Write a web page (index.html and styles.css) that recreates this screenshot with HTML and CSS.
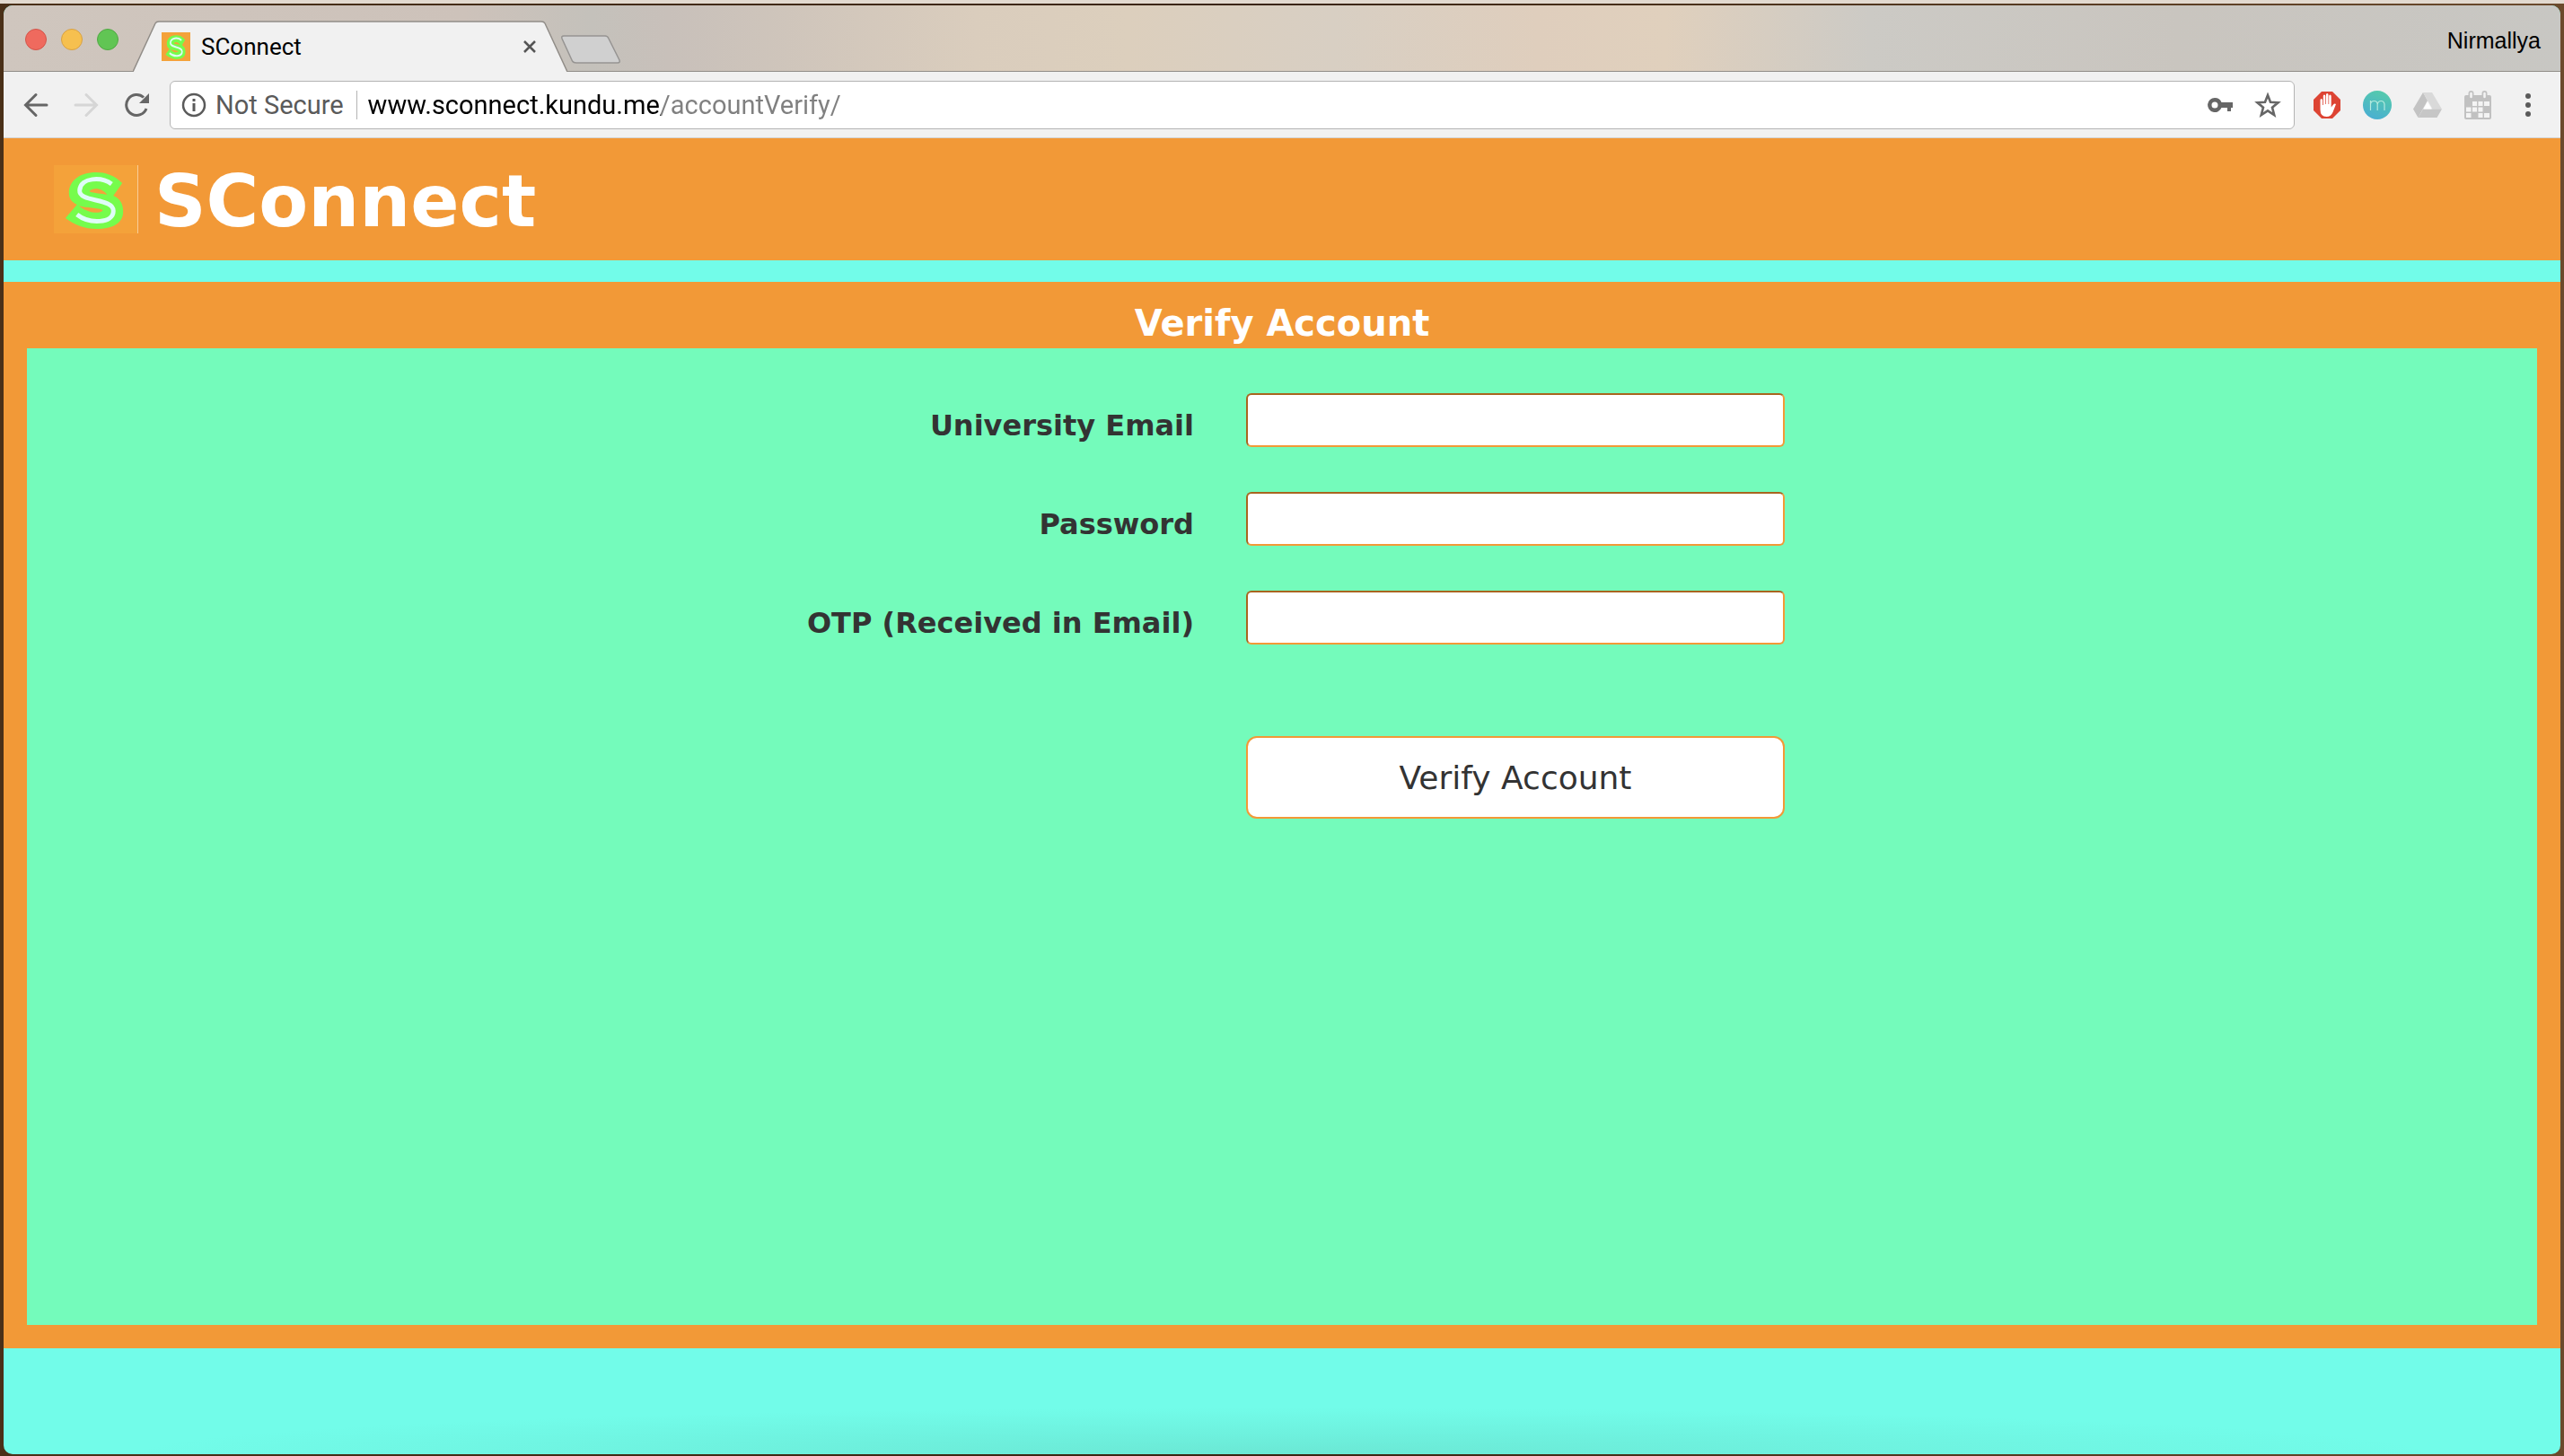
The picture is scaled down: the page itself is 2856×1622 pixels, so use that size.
FILE: index.html
```
<!DOCTYPE html>
<html lang="en">
<head>
<meta charset="utf-8">
<title>SConnect</title>
<link rel="stylesheet" href="styles.css">
</head>
<body>
<svg class="defs" width="0" height="0" aria-hidden="true">
  <symbol id="logo" viewBox="0 0 94 76" preserveAspectRatio="none">
    <rect width="94" height="76" fill="#f4a23a"/>
    <path fill-rule="evenodd" d="M77 20C68 11 58 8 48 8C28 8 17 18 17 31C17 37 20 41 26 44L13 59C24 67 35 71 48 71C67 71 78 64 78 52C78 42 74 37 67 34ZM40 29C44 25 54 25 60 33C50 31 42 31 40 29ZM28 45C36 48 50 47 55 50C54 54 40 55 28 45Z" fill="#76fc4c"/>
    <path d="M65 21C54 13 30 13 29 28C28 42 67 36 67 51C67 65 40 66 26 55" fill="none" stroke="#dffcf8" stroke-width="5"/>
  </symbol>
</svg>
<div class="window">
  <header class="titlebar">
    <div class="lights"><span class="light red"></span><span class="light yellow"></span><span class="light green"></span></div>
    <div class="tab">
      <svg class="tab-shape" viewBox="0 0 484 57" preserveAspectRatio="none"><path d="M0 57L25 3Q26 1 29 1H455Q458 1 459 3L484 57" fill="#f1f1f1" stroke="#918d88" stroke-width="1.500"/></svg>
      <svg class="favicon"><use href="#logo"/></svg>
      <span class="tab-title">SConnect</span>
      <button class="close" aria-label="Close tab"><svg width="16" height="16" viewBox="0 0 16 16"><path d="M2 2L14 14M14 2L2 14" stroke="#555" stroke-width="2.500"/></svg></button>
    </div>
    <button class="new-tab" aria-label="New tab"><svg width="68" height="34" viewBox="0 0 68 34"><path d="M4 1H50Q53 1 54 4L66 28Q67 31 64 31H18Q14 31 13 28L2 4Q1 1 4 1Z" fill="#d0d0d0" stroke="#969492" stroke-width="1.500"/></svg></button>
    <span class="profile">Nirmallya</span>
  </header>
  <nav class="toolbar">
    <button class="nav" aria-label="Back"><svg width="28" height="28" viewBox="0 0 28 28"><path d="M26 14H3M14 2.500L2.500 14L14 25.500" fill="none" stroke="#666" stroke-width="3" stroke-linecap="round"/></svg></button>
    <button class="nav" aria-label="Forward"><svg width="28" height="28" viewBox="0 0 28 28"><path d="M2 14H25M14 2.500L25.500 14L14 25.500" fill="none" stroke="#d6d6d6" stroke-width="3" stroke-linecap="round"/></svg></button>
    <button class="nav" aria-label="Reload"><svg width="28" height="28" viewBox="0 0 28 28"><path d="M25 18A11.500 11.500 0 1 1 22 5.500" fill="none" stroke="#666" stroke-width="3"/><path d="M28 1V12H17Z" fill="#666"/></svg></button>
    <div class="address">
      <svg width="28" height="28" viewBox="0 0 28 28"><circle cx="14" cy="14" r="12" fill="none" stroke="#5a5a5a" stroke-width="2.500"/><path d="M12.500 7H15.500V10H12.500ZM12.500 12H15.500V21H12.500Z" fill="#5a5a5a"/></svg>
      <span class="security">Not Secure</span>
      <input class="url" type="text" aria-label="Address" value="www.sconnect.kundu.me/accountVerify/">
      <svg width="28" height="18" viewBox="0 0 28 18"><path fill-rule="evenodd" d="M8 1A8 8 0 1 0 15.500 12H22V16H26V12H28V6H15.500A8 8 0 0 0 8 1ZM8 5.500A3.500 3.500 0 1 1 8 12.500A3.500 3.500 0 1 1 8 5.500Z" fill="#666"/></svg>
      <svg class="star" width="30" height="30" viewBox="0 0 30 30"><path d="M15 4L18 11.800L26.500 12.300L20 17.700L22.200 26L15 21.400L7.800 26L10 17.700L3.500 12.300L12 11.800Z" fill="none" stroke="#666" stroke-width="2.600"/></svg>
    </div>
    <div class="extensions">
      <svg width="32" height="32" viewBox="0 0 32 32"><path d="M10 1H22L31 10V22L22 31H10L1 22V10Z" fill="#dd4433"/><path d="M8.500 10.500Q8.500 9 9.700 9T11 10.500V16H11.800V6Q11.800 4.500 13 4.500T14.300 6V15H15V4.500Q15 3 16.200 3T17.500 4.500V15H18.200V6Q18.200 4.500 19.400 4.500T20.700 6V18.500L23 15.500Q24.500 14 26 15L22.500 24Q20.500 29 15.500 29Q8.500 29 8.500 21Z" fill="#fff"/></svg>
      <svg width="32" height="32" viewBox="0 0 32 32"><defs><linearGradient id="mg" x1=".7" y1="0" x2=".3" y2="1"><stop stop-color="#55cbab"/><stop offset="1" stop-color="#49aed2"/></linearGradient></defs><circle cx="16" cy="16" r="16" fill="url(#mg)"/><path d="M8.500 22V11M8.500 15Q9 11.500 12.500 11.500T16.200 15V22M16.200 15Q17 11.500 20.200 11.500T24 15V22" fill="none" stroke="#b4eadf" stroke-width="1.200"/></svg>
      <svg width="32" height="32" viewBox="0 0 32 32"><path d="M11 2L16 11L5.500 30L0 20.500Z" fill="#c3c3c3"/><path d="M11 2H21L32 20.500H21.500Z" fill="#d9d9d9"/><path d="M11 20.500H32L26.500 30H5.500Z" fill="#c6c6c6"/><path d="M16 12.500L20.500 20.500H11.500Z" fill="#fff"/></svg>
      <svg width="32" height="32" viewBox="0 0 32 32"><path d="M1 7Q1 5 3 5H29Q31 5 31 7V30Q31 32 29 32H3Q1 32 1 30Z" fill="#c1c1c1"/><path d="M8.500 3V7M23.500 3V7" stroke="#c1c1c1" stroke-width="6" stroke-linecap="round"/><path d="M8.500 3V7M23.500 3V7" stroke="#f4f4f4" stroke-width="2.500" stroke-linecap="round"/><path d="M10 12H15V17H10ZM16.500 12H21.500V17H16.500ZM23 12H29V17H23ZM3 18.500H8.500V23.500H3ZM16.500 18.500H21.500V23.500H16.500ZM3 25H8.500V30H3ZM16.500 25H21.500V30H16.500ZM23 25H29V30H23ZM10 18.500H15V23.500H10Z" fill="#f4f4f4"/></svg>
    </div>
    <button class="menu" aria-label="Menu"><svg width="8" height="28" viewBox="0 0 8 28"><g fill="#5a5a5a"><circle cx="4" cy="4" r="3"/><circle cx="4" cy="14" r="3"/><circle cx="4" cy="24" r="3"/></g></svg></button>
  </nav>
  <main class="page">
    <div class="brand"><svg class="logo"><use href="#logo"/></svg><h1>SConnect</h1></div>
    <section class="panel">
      <h2>Verify Account</h2>
      <form class="form">
        <label for="email">University Email</label><input id="email" type="email">
        <label for="password">Password</label><input id="password" type="password">
        <label for="otp">OTP (Received in Email)</label><input id="otp" type="text">
        <button class="submit" type="button">Verify Account</button>
      </form>
    </section>
  </main>
</div>
</body>
</html>
```
FILE: styles.css
```
* { box-sizing: border-box; }
body {
  margin: 0;
  min-height: 100vh;
  padding: 6px 4px 2px;
  display: flex;
  background: linear-gradient(#e2d9cf 0 4px, transparent 4px), linear-gradient(90deg, #4a3018, #3a2412 50%, #6b4a2c);
  font-family: Roboto, "Liberation Sans", sans-serif;
}
.defs { position: absolute; }
svg { display: block; flex: none; }
button { border: 0; padding: 0; background: none; font: inherit; }
.window {
  flex: 1;
  display: flex;
  flex-direction: column;
  overflow: hidden;
  border-radius: 10px;
  background: #72fce9;
}
.titlebar {
  height: 74px;
  display: flex;
  align-items: flex-end;
  border-bottom: 1px solid #918d88;
  background: linear-gradient(90deg, #cfc6be 0, #cdc2ba 18%, #c4c1bb 23%, #c8c0ba 26%, #dacdbd 38%, #dccfbd 44%, #d8cfc3 52%, #dfcebd 60%, #e0d0bd 65%, #cccac5 73%, #c9c5bf 85%, #c8c7c3 100%);
}
.lights { display: flex; gap: 16px; padding: 0 16px 23px 24px; }
.light { width: 24px; height: 24px; border-radius: 50%; border: 1px solid; }
.red { background: #ef6a5e; border-color: #d2554a; }
.yellow { background: #f6c04f; border-color: #d8a144; }
.green { background: #61c554; border-color: #51a844; }
.tab {
  width: 484px;
  height: 57px;
  margin: 0 -8px -1px 0;
  padding: 0 34px 0 32px;
  position: relative;
  display: flex;
  align-items: center;
  font-size: 26px;
}
.tab-shape { position: absolute; inset: 0; width: 100%; height: 100%; }
.favicon, .tab-title, .close { position: relative; }
.favicon { width: 32px; height: 32px; }
.tab-title { flex: 1; margin-left: 12px; }
.new-tab { margin-bottom: 6px; }
.profile { margin: 0 22px 18px auto; font: 25px/32px "Liberation Sans", Arial, sans-serif; }
.toolbar {
  height: 74px;
  display: flex;
  align-items: center;
  padding: 0 32px 0 22px;
  border-bottom: 1px solid #d4d2d0;
  background: #f1f1f1;
}
.nav { margin-right: 28px; }
.nav:nth-of-type(3) { margin-right: 23px; }
.address {
  flex: 1;
  height: 54px;
  display: flex;
  align-items: center;
  padding: 0 14px 0 12px;
  border: 1px solid #b4b4b4;
  border-radius: 6px;
  background: #fff;
  font-size: 29px;
}
.security { color: #5a5a5a; margin-left: 10px; padding-right: 14px; border-right: 1px solid #b4b4b4; line-height: 32px; }
/* The host name is black and the rest of the address grey. */
.url {
  flex: 1;
  min-width: 0;
  margin-left: 12px;
  padding: 0;
  border: 0;
  font: inherit;
  color: transparent;
  background: linear-gradient(90deg, #000 326px, #808080 326px);
  background-clip: text;
  -webkit-background-clip: text;
}
.star { margin-left: 24px; }
.extensions { display: flex; gap: 24px; margin: 0 36px 0 20px; }
.page {
  flex: 1;
  font-family: Verdana, "DejaVu Sans", sans-serif;
  color: #333;
  background: radial-gradient(ellipse 45% 52px at 50% 100%, rgba(90, 185, 165, .3), rgba(90, 185, 165, .15) 50%, transparent);
}
.brand { height: 136px; display: flex; align-items: center; padding: 0 56px; background: #f29937; }
.logo { width: 94px; height: 76px; border-right: 1px solid #f8cd98; }
h1 { margin: 0; padding: 6px 0 0 18px; font-size: 80px; line-height: 96px; color: #fff; }
.panel { margin-top: 24px; padding: 0 26px 26px; background: #f29937; }
h2 { margin: 0; padding-top: 18px; font-size: 40px; line-height: 56px; text-align: center; color: #fff; }
.form {
  min-height: 1088px;
  padding-top: 50px;
  display: grid;
  grid-template-columns: 1300fr 600fr 780fr;
  grid-auto-rows: min-content;
  gap: 50px 58px;
  background: #74fbbb;
}
.form label { grid-column: 1; text-align: right; font-size: 32px; line-height: 48px; padding-top: 12px; font-weight: bold; }
.form input {
  grid-column: 2;
  width: 100%;
  height: 60px;
  padding: 4px 12px;
  border: 2px solid;
  border-color: #a8651f #f29937 #f29937 #a8651f;
  border-radius: 6px;
  background: #fff;
  font: 32px/48px Verdana, "DejaVu Sans", sans-serif;
}
.submit {
  grid-column: 2;
  height: 92px;
  margin-top: 52px;
  border: 2px solid #f29937;
  border-radius: 12px;
  background: #fff;
  color: #333;
  font-size: 36px;
}
```
